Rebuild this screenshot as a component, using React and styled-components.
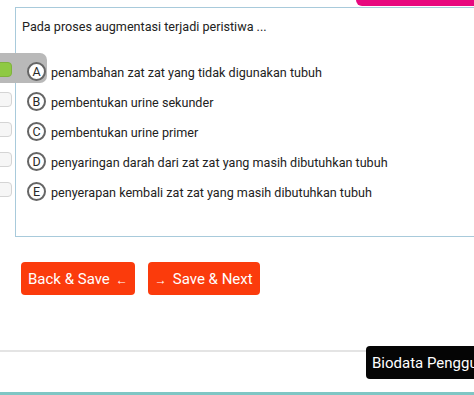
import React, { useState } from 'react';
import styled, { createGlobalStyle } from 'styled-components';

const GlobalStyle = createGlobalStyle`
  html, body {
    margin: 0;
    padding: 0;
    background: #ffffff;
  }
  body {
    font-family: Roboto, "Noto Sans", "Liberation Sans", sans-serif;
    color: #222222;
  }
`;

const Page = styled.div`
  width: 474px;
  height: 395px;
  overflow: hidden;
  display: flex;
  flex-direction: column;
`;

const TopBar = styled.div`
  display: flex;
  justify-content: flex-end;
  height: 7px;
`;

const PinkTab = styled.div`
  width: 118px;
  height: 6px;
  background: #e8087f;
  border-bottom-left-radius: 8px;
`;

const Card = styled.div`
  margin-left: 15px;
  height: 231px;
  border: 1px solid #a8cadb;
  border-right: none;
  padding: 10px 0 0 6px;
  box-sizing: border-box;
`;

const Question = styled.p`
  margin: 0;
  font-size: 12.6px;
  line-height: 18px;
`;

const OptionList = styled.div`
  margin: 17px 0 0 -27px;
  display: flex;
  flex-direction: column;
`;

const OptionRow = styled.div`
  display: flex;
  align-items: flex-start;
  height: 30px;
  cursor: pointer;
`;

const Selector = styled.div`
  display: flex;
  align-items: center;
  gap: 15px;
  height: 30px;
  box-sizing: border-box;
  padding: 7px 1px 0 0;
  background: ${p => (p.$active ? '#b9b9b9' : 'transparent')};
  border-radius: 0 7px 7px 0;
`;

const Check = styled.span`
  width: 17px;
  height: 15px;
  box-sizing: border-box;
  border-radius: 4px;
  margin-top: -3px;
  border: 1px solid ${p => (p.$active ? '#7fb23c' : '#d4d4d4')};
  background: ${p => (p.$active ? '#8ec943' : '#f6f6f6')};
`;

const Letter = styled.span`
  width: 19px;
  height: 19px;
  box-sizing: border-box;
  border-radius: 50%;
  border: 2px solid #666666;
  background: #ffffff;
  display: flex;
  align-items: center;
  justify-content: center;
  font-size: 12.5px;
  color: #2a2a2a;
`;

const OptionText = styled.span`
  margin-left: 4px;
  padding-top: 11px;
  font-size: 12.6px;
  line-height: 18px;
`;

const ButtonRow = styled.div`
  display: flex;
  gap: 13px;
  margin: 25px 0 0 21px;
`;

const NavButton = styled.button`
  height: 33px;
  padding: 0 7px;
  border: none;
  border-radius: 4px;
  background: #fb3b0c;
  color: #ffffff;
  font-family: Roboto, "Noto Sans", sans-serif;
  font-size: 15px;
  display: flex;
  align-items: center;
  gap: 6px;
`;

const Arrow = styled.span`
  font-size: 12px;
  margin-top: 3px;
`;

const Footer = styled.div`
  display: flex;
  align-items: flex-start;
  margin-top: 51px;
`;

const Rule = styled.div`
  flex: 1;
  height: 2px;
  margin-top: 4px;
  background: #e4e4e4;
`;

const Tooltip = styled.div`
  width: 108px;
  flex-shrink: 0;
  height: 33px;
  box-sizing: border-box;
  padding-left: 6px;
  background: #050505;
  color: #ffffff;
  border-radius: 4px 0 0 4px;
  font-size: 15px;
  white-space: nowrap;
  overflow: hidden;
  display: flex;
  align-items: center;
`;

const BottomLine = styled.div`
  margin-top: 13px;
  height: 3px;
  background: #7fc6c4;
`;

const options = [
  { key: 'A', text: 'penambahan zat zat yang tidak digunakan tubuh' },
  { key: 'B', text: 'pembentukan urine sekunder' },
  { key: 'C', text: 'pembentukan urine primer' },
  { key: 'D', text: 'penyaringan darah dari zat zat yang masih dibutuhkan tubuh' },
  { key: 'E', text: 'penyerapan kembali zat zat yang masih dibutuhkan tubuh' },
];

export default function App() {
  const [selected, setSelected] = useState('A');

  return (
    <>
      <GlobalStyle />
      <Page>
        <TopBar>
          <PinkTab />
        </TopBar>
        <Card>
          <Question>Pada proses augmentasi terjadi peristiwa ...</Question>
          <OptionList>
            {options.map(opt => (
              <OptionRow key={opt.key} onClick={() => setSelected(opt.key)}>
                <Selector $active={selected === opt.key}>
                  <Check $active={selected === opt.key} />
                  <Letter>{opt.key}</Letter>
                </Selector>
                <OptionText>{opt.text}</OptionText>
              </OptionRow>
            ))}
          </OptionList>
        </Card>
        <ButtonRow>
          <NavButton>Back &amp; Save <Arrow>←</Arrow></NavButton>
          <NavButton><Arrow>→</Arrow> Save &amp; Next</NavButton>
        </ButtonRow>
        <Footer>
          <Rule />
          <Tooltip>Biodata Pengguna</Tooltip>
        </Footer>
        <BottomLine />
      </Page>
    </>
  );
}
